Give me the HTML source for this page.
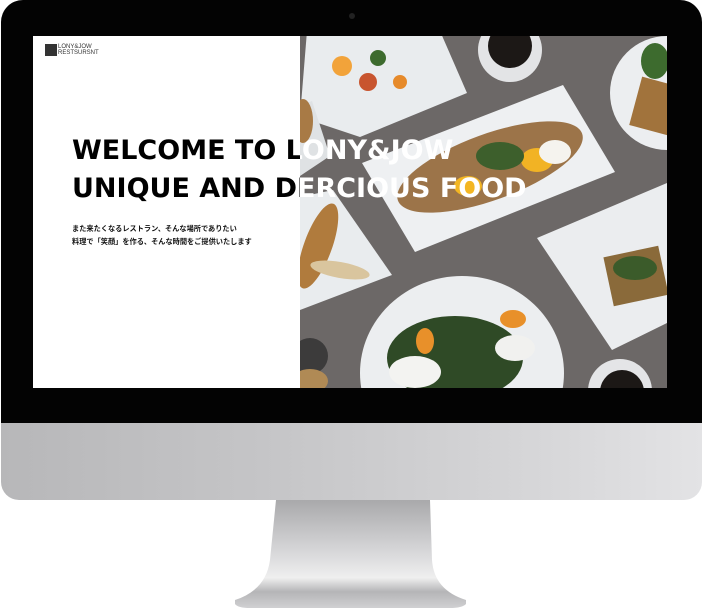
<!DOCTYPE html>
<html><head><meta charset="utf-8"><style>
html,body{margin:0;padding:0;background:#fff;width:704px;height:612px;overflow:hidden;position:relative}
.bezel{position:absolute;left:1px;top:0;width:701px;height:424px;background:#030303;border-radius:22px 22px 0 0}
.cam{position:absolute;left:348px;top:13px;width:6px;height:6px;border-radius:50%;background:#222}
.chin{position:absolute;left:1px;top:423px;width:701px;height:77px;border-radius:0 0 18px 18px;background:linear-gradient(90deg,#b7b7b9 0%,#c6c6c8 40%,#d8d8da 80%,#e3e3e5 100%)}
.screen{position:absolute;left:33px;top:36px;width:634px;height:352px;background:#fff;overflow:hidden}
.photo{position:absolute;left:267px;top:0;width:367px;height:352px;overflow:hidden;background:#6c6867}
.txt{position:absolute;left:39px;top:0;width:600px}
.h{font-family:"DejaVu Sans",sans-serif;font-weight:bold;font-size:27px;line-height:38px;position:absolute;top:96px;left:0;white-space:nowrap}
.j{font-family:"Liberation Sans","Noto Sans CJK JP",sans-serif;font-weight:bold;font-size:7.2px;line-height:13px;position:absolute;top:186px;left:0;white-space:nowrap}
.logo{position:absolute;left:12px;top:8px}
.logo .sq{position:absolute;left:0;top:0;width:12px;height:12px;background:#333}
.logo .t{position:absolute;left:13px;top:0;font-family:"Liberation Sans",sans-serif;font-size:6px;line-height:6px;color:#333;white-space:nowrap}
</style></head><body>
<div class="bezel"><div class="cam"></div></div>
<div class="chin"></div>
<svg style="position:absolute;left:0;top:0" width="704" height="612">
<defs><linearGradient id="st" x1="0" y1="0" x2="0" y2="1"><stop offset="0" stop-color="#a9a9ab"/><stop offset="0.5" stop-color="#d9d9db"/><stop offset="0.72" stop-color="#efefef"/><stop offset="0.85" stop-color="#b5b5b7"/><stop offset="1" stop-color="#d0d0d2"/></linearGradient></defs>
<path d="M276 500 L430 500 L432 560 Q434 590 466 600 L466 604 Q462 608 450 608 L250 608 Q238 608 235 604 L235 600 Q266 590 270 560 Z" fill="url(#st)"/>
</svg>
<div class="screen">
  <div class="logo"><div class="sq"></div><div class="t">LONY&amp;JOW<br>RESTSURSNT</div></div>
  <div class="txt">
    <div class="h" style="color:#000">WELCOME TO LONY&amp;JOW<br>UNIQUE AND DERCIOUS FOOD</div>
    <div class="j" style="color:#111">また来たくなるレストラン、そんな場所でありたい<br>料理で「笑顔」を作る、そんな時間をご提供いたします</div>
  </div>
  <div class="photo">
    <svg width="367" height="352" style="position:absolute;left:0;top:0">
      <polygon points="7,-5 140,-5 167,57 60,101 0,81" fill="#e9ecee"/>
      <circle cx="42" cy="30" r="10" fill="#f2a33a"/><circle cx="68" cy="46" r="9" fill="#c8552f"/><circle cx="100" cy="46" r="7" fill="#e68a2a"/><circle cx="78" cy="22" r="8" fill="#3d6b2e"/>
      <polygon points="0,70 12,65 30,120 0,140" fill="#dfe2e4"/>
      <ellipse cx="3" cy="85" rx="10" ry="22" fill="#a87a45"/>
      <circle cx="210" cy="14" r="32" fill="#e3e4e6"/><circle cx="210" cy="10" r="22" fill="#1c1816"/>
      <polygon points="62,127 263,49 315,136 115,216" fill="#eef0f2"/>
      <ellipse cx="190" cy="131" rx="98" ry="33" transform="rotate(-20 190 131)" fill="#9c7449"/>
      <ellipse cx="168" cy="150" rx="14" ry="10" fill="#f3b623"/><ellipse cx="237" cy="124" rx="16" ry="12" fill="#f2b324"/><ellipse cx="255" cy="116" rx="16" ry="12" fill="#f5f3ee"/>
      <ellipse cx="200" cy="120" rx="24" ry="14" fill="#3d5f2c"/>
      <circle cx="367" cy="57" r="57" fill="#eceef0"/>
      <rect x="335" y="45" width="40" height="50" fill="#a1733c" transform="rotate(15 355 70)"/>
      <ellipse cx="355" cy="25" rx="14" ry="18" fill="#3d6b2e"/>
      <polygon points="0,161 33,154 92,239 0,274" fill="#e9ecee"/>
      <ellipse cx="18" cy="210" rx="14" ry="45" transform="rotate(20 18 210)" fill="#b07b3d"/>
      <ellipse cx="40" cy="234" rx="30" ry="8" transform="rotate(10 40 234)" fill="#d9c59e"/>
      <polygon points="237,202 367,147 367,287 312,314" fill="#ebedef"/>
      <rect x="308" y="215" width="56" height="50" fill="#8a6a3a" transform="rotate(-12 336 240)"/>
      <ellipse cx="335" cy="232" rx="22" ry="12" fill="#3b5b2a"/>
      <ellipse cx="162" cy="337" rx="102" ry="97" fill="#eceef0"/>
      <ellipse cx="155" cy="322" rx="68" ry="42" fill="#2f4a26"/>
      <ellipse cx="215" cy="312" rx="20" ry="13" fill="#f1f1ef"/><ellipse cx="115" cy="336" rx="26" ry="16" fill="#f3f3f1"/>
      <ellipse cx="125" cy="305" rx="9" ry="13" fill="#e8902a"/><ellipse cx="213" cy="283" rx="13" ry="9" fill="#e8902a"/>
      <circle cx="320" cy="355" r="32" fill="#e4e5e7"/><circle cx="322" cy="356" r="22" fill="#1c1816"/>
      <circle cx="10" cy="320" r="18" fill="#3c3b3b"/>
      <ellipse cx="10" cy="345" rx="18" ry="12" fill="#b08a55"/>
    </svg>
    <div class="txt" style="left:-228px">
      <div class="h" style="color:#fff">WELCOME TO LONY&amp;JOW<br>UNIQUE AND DERCIOUS FOOD</div>
    </div>
  </div>
</div>
</body></html>
